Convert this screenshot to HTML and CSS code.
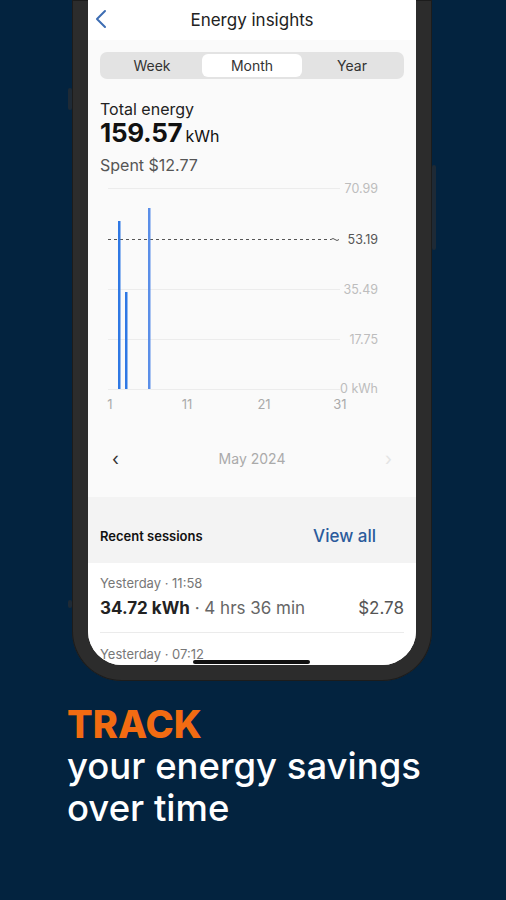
FILE: index.html
```html
<!DOCTYPE html>
<html lang="en">
<head>
    <meta charset="UTF-8">
    <meta name="viewport" content="width=device-width, initial-scale=1.0">
    <title>Energy insights</title>
    <link rel="stylesheet" href="styles.css">
</head>
<body>
    <div class="phone">
        <span class="side-btn left-a"></span>
        <span class="side-btn left-b"></span>
        <span class="side-btn right-a"></span>
        <div class="screen">
            <div class="topbar">
                <svg class="back" width="12" height="20" viewBox="0 0 12 20">
                    <path d="M10 2 L2 10 L10 18" fill="none" stroke="#3d6db3" stroke-width="2" stroke-linecap="round" stroke-linejoin="round"/>
                </svg>
                <div class="title">Energy insights</div>
            </div>

            <div class="content">
                <div class="segments">
                    <div class="seg">Week</div>
                    <div class="seg active">Month</div>
                    <div class="seg">Year</div>
                </div>

                <div class="totals">
                    <div class="label">Total energy</div>
                    <div class="amount">159.57<span class="unit">kWh</span></div>
                    <div class="spent">Spent $12.77</div>
                </div>

                <svg class="chart" width="327" height="235" viewBox="0 0 327 235">
                    <g stroke="#ececec" stroke-width="1">
                        <line x1="20" y1="8.5" x2="252" y2="8.5"/>
                        <line x1="20" y1="109.5" x2="252" y2="109.5"/>
                        <line x1="20" y1="159.5" x2="252" y2="159.5"/>
                        <line x1="20" y1="209.5" x2="252" y2="209.5"/>
                    </g>
                    <line x1="20" y1="59.5" x2="243" y2="59.5" stroke="#555" stroke-width="1" stroke-dasharray="3 3"/>
                    <path d="M243 59.5 q2 -2 4 0 t4 0" fill="none" stroke="#555" stroke-width="1"/>
                    <g fill="#2f78e4">
                        <rect x="30" y="41" width="2.5" height="168"/>
                        <rect x="37" y="112" width="2.5" height="97"/>
                        <rect x="60" y="28" width="2.5" height="181" fill="#5a8ee8"/>
                    </g>
                    <g class="ylab" text-anchor="end">
                        <text x="290" y="13">70.99</text>
                        <text x="290" y="64" class="avg">53.19</text>
                        <text x="290" y="114">35.49</text>
                        <text x="290" y="164">17.75</text>
                        <text x="290" y="213">0 kWh</text>
                    </g>
                    <g class="xlab" text-anchor="middle">
                        <text x="22" y="229">1</text>
                        <text x="99" y="229">11</text>
                        <text x="176" y="229">21</text>
                        <text x="252" y="229">31</text>
                    </g>
                </svg>

                <div class="month-nav">
                    <span class="nav-arrow">‹</span>
                    <span class="month">May 2024</span>
                    <span class="nav-arrow faint">›</span>
                </div>
            </div>

            <div class="sessions-head">
                <span class="sessions-title">Recent sessions</span>
                <span class="view-all">View all</span>
            </div>

            <div class="sessions">
                <div class="session">
                    <div class="when">Yesterday · 11:58</div>
                    <div class="row">
                        <span><b>34.72 kWh</b><span class="dur"> · 4 hrs 36 min</span></span>
                        <span class="cost">$2.78</span>
                    </div>
                </div>
                <div class="session">
                    <div class="when">Yesterday · 07:12</div>
                </div>
            </div>

            <span class="home-bar"></span>
        </div>
    </div>

    <div class="caption">
        <div class="headline">TRACK</div>
        <div class="subline">your energy savings<br>over time</div>
    </div>
</body>
</html>
```

FILE: styles.css
```css
body {
    margin: 0;
    background-color: #03233f;
    font-family: Inter, "Noto Sans", sans-serif;
    overflow: hidden;
}
.phone {
    position: relative;
    width: 328px;
    margin-left: 72px;
    padding: 0 16px 16px 16px;
    background-color: #2c2c2c;
    border-radius: 0 0 50px 50px;
    box-shadow: inset 0 0 0 1px #1c1c1c;
}
.side-btn {
    position: absolute;
    width: 4px;
    background-color: #1e2a36;
    border-radius: 2px;
}
.left-a { left: -4px; top: 88px; height: 22px; }
.left-b { left: -4px; top: 600px; height: 8px; }
.right-a { right: -4px; top: 165px; height: 85px; }
.screen {
    position: relative;
    height: 665px;
    overflow: hidden;
    background-color: #fafafa;
    border-radius: 0 0 34px 34px;
}
.topbar {
    position: relative;
    height: 40px;
    background-color: #ffffff;
    display: flex;
    align-items: center;
    justify-content: center;
}
.back {
    position: absolute;
    left: 7px;
    top: 9px;
}
.title {
    font-size: 17px;
    color: #222;
}
.content {
    padding-top: 12px;
}
.segments {
    margin: 0 12px;
    height: 27px;
    background-color: #e3e3e3;
    border-radius: 7px;
    display: flex;
    align-items: center;
    padding: 0 2px;
}
.seg {
    flex: 1;
    text-align: center;
    font-size: 14px;
    color: #333;
    line-height: 23px;
}
.seg.active {
    background-color: #ffffff;
    border-radius: 6px;
}
.totals {
    padding: 20px 12px 0;
}
.label {
    font-size: 16px;
    line-height: 20px;
    color: #222;
}
.amount {
    font-size: 26px;
    font-weight: 700;
    line-height: 28px;
    color: #111;
    letter-spacing: -0.3px;
}
.unit {
    font-size: 16px;
    font-weight: 400;
    margin-left: 3px;
    letter-spacing: 0;
}
.spent {
    margin-top: 5px;
    font-size: 16px;
    line-height: 20px;
    color: #555;
}
.chart {
    display: block;
    margin-top: 5px;
}
.ylab text {
    font-size: 12.5px;
    fill: #bdbdbd;
}
.ylab text.avg {
    fill: #555;
}
.xlab text {
    font-size: 13px;
    fill: #aaa;
}
.month-nav {
    margin-top: 25px;
    height: 36px;
    padding: 0 24px 0 24px;
    display: flex;
    align-items: center;
    justify-content: space-between;
}
.nav-arrow {
    font-size: 18px;
    color: #333;
}
.nav-arrow.faint {
    color: #e4e4e4;
}
.month {
    font-size: 14px;
    color: #aaa;
}
.sessions-head {
    margin-top: 21px;
    height: 66px;
    box-sizing: border-box;
    padding: 12px 40px 0 12px;
    background-color: #f3f3f3;
    display: flex;
    justify-content: space-between;
    align-items: center;
}
.sessions-title {
    font-size: 13px;
    font-weight: 600;
    color: #111;
}
.view-all {
    font-size: 17px;
    font-weight: 500;
    color: #2b5b9c;
}
.sessions {
    background-color: #ffffff;
    padding: 0 12px;
    height: 200px;
}
.session {
    padding-top: 12px;
}
.session + .session {
    border-top: 1px solid #ebebeb;
    padding-top: 13px;
}
.when {
    font-size: 13px;
    line-height: 16px;
    color: #777;
}
.row {
    display: flex;
    justify-content: space-between;
    font-size: 17px;
    line-height: 22px;
    margin-top: 6px;
    padding-bottom: 13px;
    color: #222;
}
.row b {
    font-weight: 700;
}
.dur {
    color: #666;
}
.cost {
    color: #555;
}
.home-bar {
    position: absolute;
    left: 105px;
    bottom: 1px;
    width: 117px;
    height: 4px;
    background-color: #111;
    border-radius: 2px;
}
.caption {
    padding: 22px 0 0 67px;
}
.headline {
    font-size: 38px;
    font-weight: 800;
    color: #f26b12;
    line-height: 42px;
}
.subline {
    font-size: 36.5px;
    font-weight: 500;
    color: #ffffff;
    line-height: 42px;
}
```
